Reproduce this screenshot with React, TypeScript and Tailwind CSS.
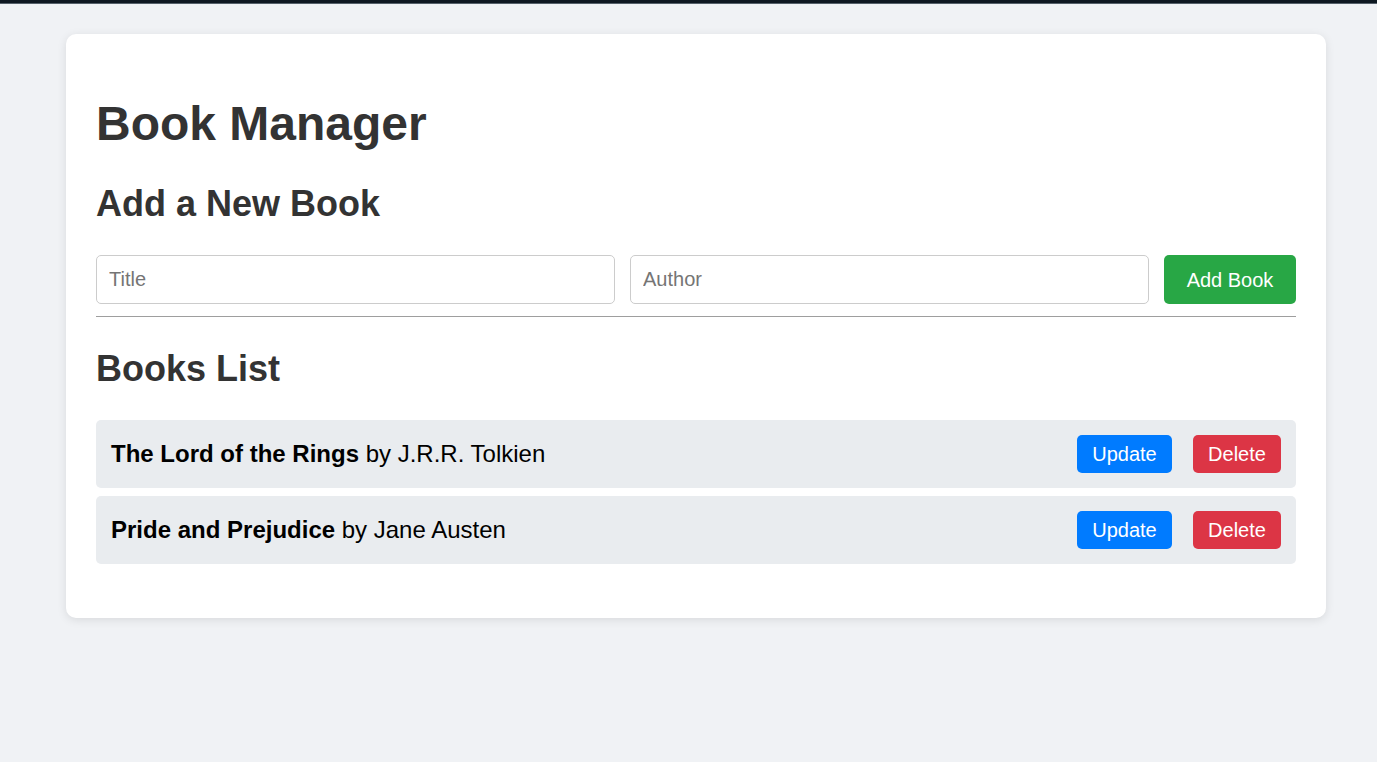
import { useState } from "react";

type Book = { id: number; title: string; author: string };

const BookRow = ({ book }: { book: Book }) => {
    return (
        <li className="flex items-center justify-between rounded-[5px] bg-[#e9ecef] p-[15px]">
            <span className="text-[24px] text-black">
                <strong className="font-bold">{book.title}</strong> by {book.author}
            </span>
            <div className="flex items-center gap-[21px]">
                <button className="h-[38px] w-[95px] rounded-[5px] bg-[#007bff] text-[20px] text-white">
                    Update
                </button>
                <button className="h-[38px] w-[88px] rounded-[5px] bg-[#dc3545] text-[20px] text-white">
                    Delete
                </button>
            </div>
        </li>
    );
};

export default function App() {
    const [books] = useState<Book[]>([
        { id: 1, title: "The Lord of the Rings", author: "J.R.R. Tolkien" },
        { id: 2, title: "Pride and Prejudice", author: "Jane Austen" },
    ]);

    return (
        <div className="min-h-[762px] bg-[#f0f2f5] font-['Liberation_Sans',Arial,sans-serif]">
            {/* thin dark strip along the top edge */}
            <div className="h-[3px] bg-[#0e1821]" />
            <div className="h-px bg-[#55606a]" />
            <div className="pt-[30px]">
                <div className="ml-[66px] w-[1260px] rounded-[10px] bg-white p-[30px] shadow-[0_2px_10px_rgba(0,0,0,0.1)]">
                    <h1 className="mt-[32px] text-[48px] leading-[55px] font-bold text-[#333]">Book Manager</h1>
                    <h2 className="mt-[32px] text-[36px] leading-[41px] font-bold text-[#333]">Add a New Book</h2>

                    <div className="mt-[31px] flex gap-[15px]">
                        <input
                            placeholder="Title"
                            className="h-[49px] flex-1 rounded-[5px] border border-[#ccc] px-[12px] text-[20px] text-[#333] placeholder:text-[#757575] outline-none"
                        />
                        <input
                            placeholder="Author"
                            className="h-[49px] flex-1 rounded-[5px] border border-[#ccc] px-[12px] text-[20px] text-[#333] placeholder:text-[#757575] outline-none"
                        />
                        <button className="h-[49px] w-[132px] rounded-[5px] bg-[#28a745] text-[20px] text-white">
                            Add Book
                        </button>
                    </div>
                    <hr className="mt-[12px] border-t-[1.5px] border-[#9e9e9e]" />

                    <h2 className="mt-[31px] text-[36px] leading-[41px] font-bold text-[#333]">Books List</h2>
                    <ul className="mt-[31px] mb-[24px] flex flex-col gap-[8px]">
                        {books.map((b) => (
                            <BookRow key={b.id} book={b} />
                        ))}
                    </ul>
                </div>
            </div>
        </div>
    );
}
